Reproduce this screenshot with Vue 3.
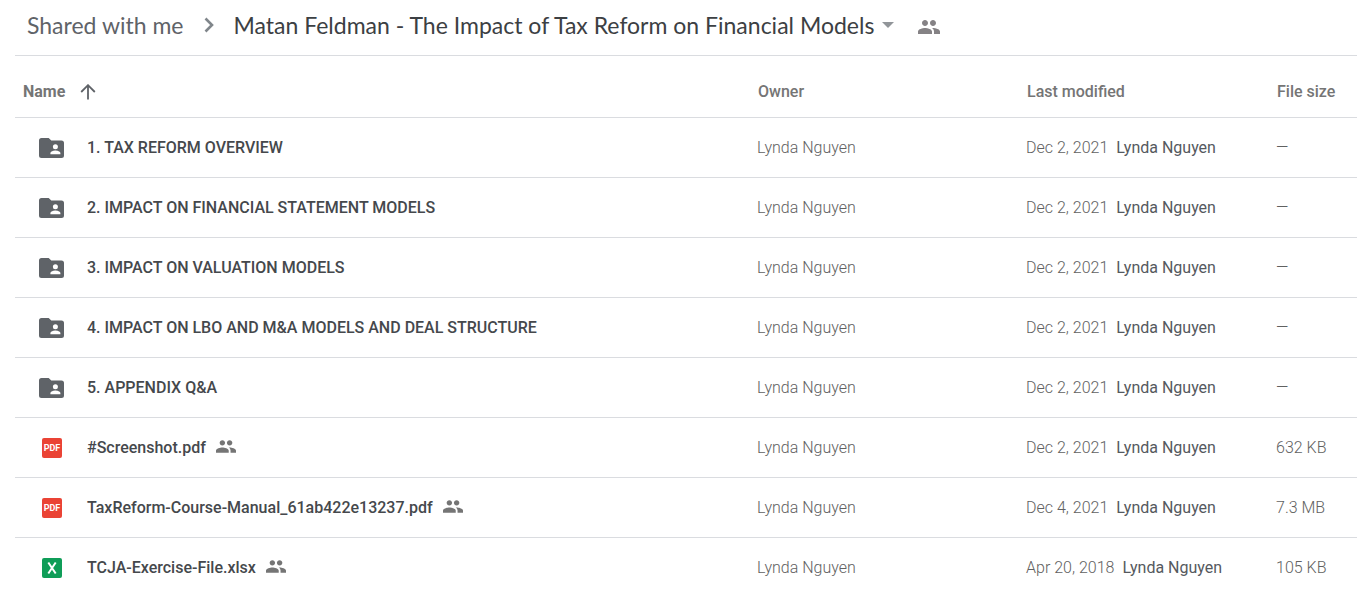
<script setup>
const people = 'M16 11c1.66 0 2.99-1.34 2.99-3S17.66 5 16 5s-3 1.34-3 3 1.34 3 3 3zm-8 0c1.66 0 2.99-1.34 2.99-3S9.66 5 8 5 5 6.34 5 8s1.34 3 3 3zm0 2c-2.33 0-7 1.17-7 3.5V19h14v-2.5c0-2.33-4.67-3.5-7-3.5zm8 0c-.29 0-.62.02-.97.05 1.16.84 1.97 1.97 1.97 3.45V19h6v-2.5c0-2.33-4.67-3.5-7-3.5z'

const files = [
  { type: 'folder', name: '1. TAX REFORM OVERVIEW', date: 'Dec 2, 2021', size: '—' },
  { type: 'folder', name: '2. IMPACT ON FINANCIAL STATEMENT MODELS', date: 'Dec 2, 2021', size: '—' },
  { type: 'folder', name: '3. IMPACT ON VALUATION MODELS', date: 'Dec 2, 2021', size: '—' },
  { type: 'folder', name: '4. IMPACT ON LBO AND M&A MODELS AND DEAL STRUCTURE', date: 'Dec 2, 2021', size: '—' },
  { type: 'folder', name: '5. APPENDIX Q&A', date: 'Dec 2, 2021', size: '—' },
  { type: 'pdf', name: '#Screenshot.pdf', date: 'Dec 2, 2021', size: '632 KB', shared: true },
  { type: 'pdf', name: 'TaxReform-Course-Manual_61ab422e13237.pdf', date: 'Dec 4, 2021', size: '7.3 MB', shared: true },
  { type: 'xlsx', name: 'TCJA-Exercise-File.xlsx', date: 'Apr 20, 2018', size: '105 KB', shared: true },
]
</script>

<template>
  <main class="drive">
    <nav class="crumbs" aria-label="Breadcrumb">
      <a class="crumb" href="#">Shared with me</a>
      <svg class="chevron" viewBox="0 0 10 16" aria-hidden="true"><path d="M1.5 1.5 8 8l-6.5 6.5" fill="none" stroke="#80868b" stroke-width="2.6" /></svg>
      <button class="current" type="button">
        <span>Matan Feldman - The Impact of Tax Reform on Financial Models</span>
        <svg class="caret" viewBox="0 0 12 6" aria-hidden="true"><path d="M0 0h12L6 6z" fill="#919599" /></svg>
      </button>
      <button class="share" type="button" aria-label="Manage sharing">
        <svg class="people-lg" viewBox="1 5 22 14" aria-hidden="true"><path :d="people" fill="#858285" /></svg>
      </button>
    </nav>

    <table class="list">
      <colgroup>
        <col />
        <col class="c-owner" />
        <col class="c-modified" />
        <col class="c-size" />
      </colgroup>
      <thead>
        <tr>
          <th scope="col" aria-sort="ascending">
            <button class="sort" type="button">
              Name
              <svg class="arrow" viewBox="0 0 16 16" aria-hidden="true"><path d="M8 15.5V2M1.2 8 8 1.2 14.8 8" fill="none" stroke="#5f6368" stroke-width="1.8" /></svg>
            </button>
          </th>
          <th scope="col">Owner</th>
          <th scope="col">Last modified</th>
          <th scope="col">File size</th>
        </tr>
      </thead>
      <tbody>
        <tr v-for="file in files" :key="file.name">
          <td>
            <div class="file">
              <span class="icon">
                <svg v-if="file.type === 'folder'" class="folder" viewBox="0 0 25 20" aria-hidden="true">
                  <path d="M2.5 0h7.2L12.3 2.5h10.2A2.5 2.5 0 0 1 25 5v12.500a2.500 2.500 0 0 1-2.500 2.500h-20A2.500 2.500 0 0 1 0 17.500v-15A2.500 2.500 0 0 1 2.500 0z" fill="#5f6368" />
                  <circle cx="16.400" cy="8.700" r="2.500" fill="#fff" />
                  <path d="M11.400 16.200V15c0-1.700 3.300-2.600 5-2.600s5 .9 5 2.600v1.200z" fill="#fff" />
                </svg>
                <svg v-else-if="file.type === 'pdf'" class="badge" viewBox="0 0 20 20" aria-hidden="true">
                  <rect width="20" height="20" rx="2" fill="#ea4335" />
                  <text x="10" y="13" text-anchor="middle" class="pdf-label">PDF</text>
                </svg>
                <svg v-else class="badge" viewBox="0 0 20 20" aria-hidden="true">
                  <rect width="20" height="20" rx="2" fill="#0f9d58" />
                  <path d="m6.300 4.500 7.400 11M13.700 4.500l-7.400 11" stroke="#fff" stroke-width="2" />
                </svg>
              </span>
              <span class="name">{{ file.name }}</span>
              <svg v-if="file.shared" class="people-sm" viewBox="1 5 22 14" role="img" aria-label="Shared"><path :d="people" fill="#757575" /></svg>
            </div>
          </td>
          <td>Lynda Nguyen</td>
          <td>{{ file.date }}<span class="editor">Lynda Nguyen</span></td>
          <td><span :class="{ dash: file.size === '—' }">{{ file.size }}</span></td>
        </tr>
      </tbody>
    </table>
  </main>
</template>

<style>
body {
  background: #fff;
}
</style>

<style scoped>
.drive {
  padding-left: 15px;
  font-family: Roboto, "Liberation Sans", sans-serif;
  font-size: 16px;
  color: #757575;
}

.drive svg {
  display: block;
  flex: none;
}

button {
  display: flex;
  align-items: center;
  padding: 0;
  border: 0;
  background: none;
  color: inherit;
  font: inherit;
}

.crumbs {
  display: flex;
  align-items: center;
  box-sizing: border-box;
  height: 56px;
  padding: 0 12px 6px;
  border-bottom: 1px solid #dadce0;
  font-family: Lato, Roboto, sans-serif;
  font-size: 23px;
  line-height: 28px;
  white-space: nowrap;
}

.crumb {
  color: #5f6368;
  text-decoration: none;
}

.chevron {
  width: 10px;
  height: 16px;
  margin: 0 20px;
}

.current {
  gap: 8px;
  color: #3c4043;
}

.caret {
  width: 12px;
  height: 6px;
}

.share {
  margin: 4px 0 0 24px;
}

.people-lg {
  width: 22px;
  height: 14px;
}

.list {
  width: 100%;
  table-layout: fixed;
  border-collapse: separate;
  border-spacing: 0;
}

.c-owner {
  width: 269px;
}

.c-modified {
  width: 250px;
}

.c-size {
  width: 82px;
}

th,
td {
  box-sizing: border-box;
  padding: 0;
  border-bottom: 1px solid #dadce0;
  text-align: left;
  line-height: 20px;
  white-space: nowrap;
}

th {
  height: 62px;
  padding: 10px 0 0 2px;
  font-weight: 500;
}

th:first-child {
  padding-left: 8px;
}

td {
  height: 60px;
  padding-left: 1px;
  color: #616161;
  font-weight: 300;
}

td:first-child {
  padding-left: 0;
}

tbody tr:last-child td {
  border-bottom-color: transparent;
}

.sort {
  gap: 15px;
  font-weight: 700;
}

.arrow {
  width: 16px;
  height: 16px;
}

.file {
  display: flex;
  align-items: center;
}

.icon {
  display: flex;
  justify-content: center;
  width: 25px;
  margin: 0 23px 0 24px;
}

.folder {
  width: 25px;
  height: 20px;
}

.badge {
  width: 20px;
  height: 20px;
}

.pdf-label {
  fill: #fff;
  font-size: 9px;
  font-weight: 700;
}

.name {
  color: #45484c;
  font-weight: 500;
}

.people-sm {
  width: 20px;
  height: 13px;
  margin: 0 0 2px 10px;
}

.editor {
  margin-left: 8px;
  color: #55595e;
  font-weight: 400;
}

.dash {
  font-size: 16px;
}
</style>
